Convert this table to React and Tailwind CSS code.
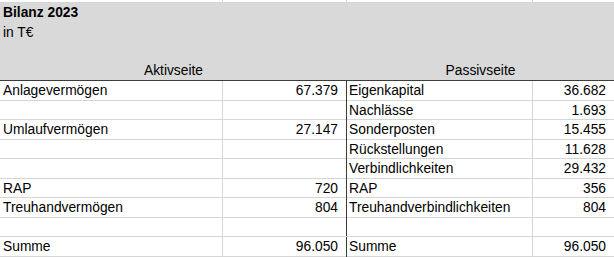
import React from 'react';

const rows = [
    ['Anlagevermögen', '67.379', 'Eigenkapital', '36.682'],
    ['', '', 'Nachlässe', '1.693'],
    ['Umlaufvermögen', '27.147', 'Sonderposten', '15.455'],
    ['', '', 'Rückstellungen', '11.628'],
    ['', '', 'Verbindlichkeiten', '29.432'],
    ['RAP', '720', 'RAP', '356'],
    ['Treuhandvermögen', '804', 'Treuhandverbindlichkeiten', '804'],
    ['', '', '', ''],
    ['Summe', '96.050', 'Summe', '96.050'],
];

const cols = 'grid grid-cols-[223px_124px_186px_81px]';

const App = () => {
    return (
        <div
            className="w-[614px] h-[257px] bg-white overflow-hidden text-[13.8px] text-black"
            style={{ fontFamily: '"Liberation Sans", Arial, sans-serif' }}
        >
            {/* row above the header, only gridlines visible */}
            <div className={`${cols} h-[3px] border-b border-[#d6d6d6]`}>
                <div className="border-r border-[#d6d6d6]" />
                <div className="border-r border-[#d6d6d6]" />
                <div className="border-r border-[#d6d6d6]" />
                <div />
            </div>

            <div className="bg-[#d9d9d9] h-[78px] border-b border-[#3c3c3c] flex flex-col">
                <div className="h-[19.5px] leading-[19.5px] pl-[3px] font-bold">Bilanz 2023</div>
                <div className="h-[19.5px] leading-[19.5px] pl-[3px]">in T€</div>
                <div className="h-[19px]" />
                <div className={`${cols} h-[19px] leading-[20px]`}>
                    <div className="col-span-2 text-center">Aktivseite</div>
                    <div className="col-span-2 text-center">Passivseite</div>
                </div>
            </div>

            {rows.map((r, i) => (
                <div key={i} className={`${cols} h-[19.5px] leading-[20px] border-b border-[#d6d6d6]`}>
                    <div className="pl-[3px] border-r border-[#d6d6d6] whitespace-nowrap">{r[0]}</div>
                    <div className="pr-[8px] text-right border-r border-[#3c3c3c]">{r[1]}</div>
                    <div className="pl-[2px] border-r border-[#d6d6d6] whitespace-nowrap">{r[2]}</div>
                    <div className="pr-[8px] text-right">{r[3]}</div>
                </div>
            ))}
        </div>
    );
};

export default App;
